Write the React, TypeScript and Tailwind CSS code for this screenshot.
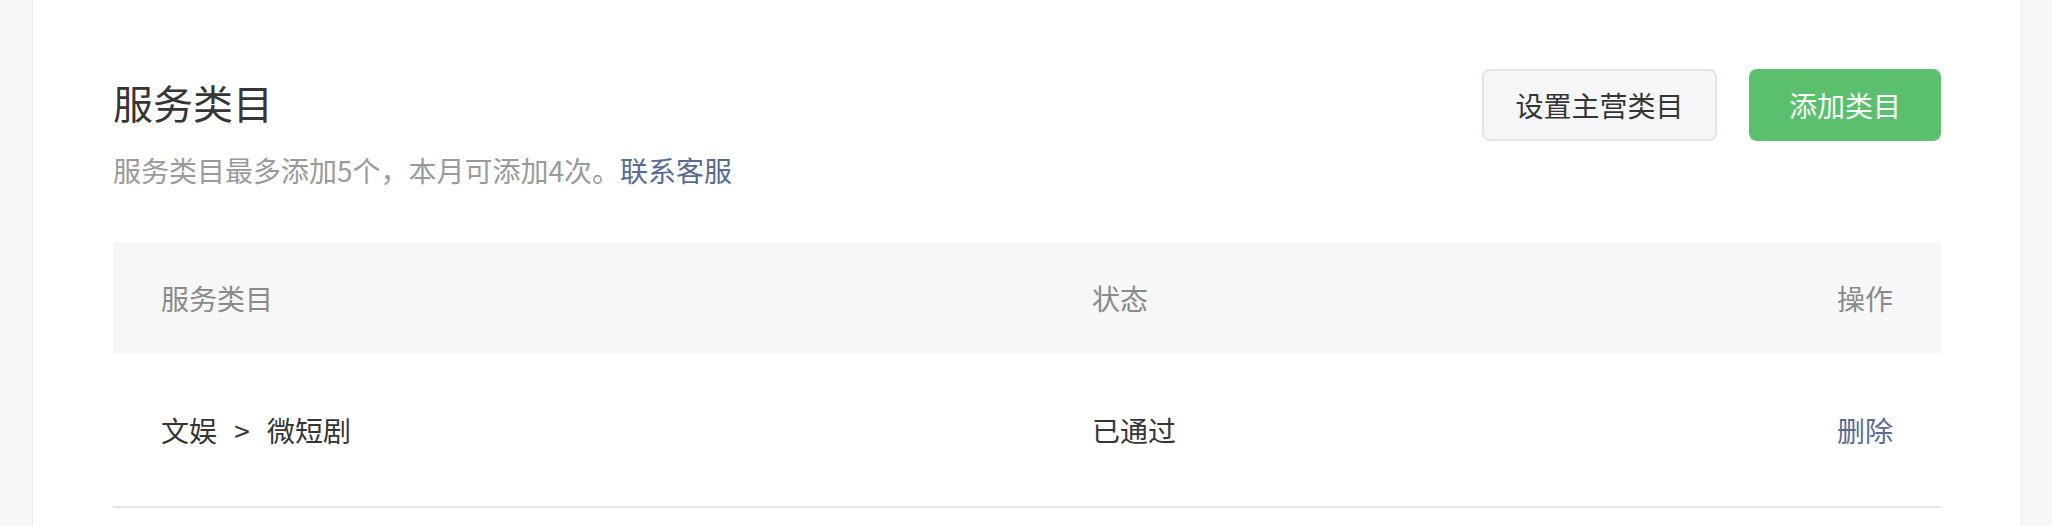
import React from "react";

const font = '"Noto Sans CJK SC", "Noto Sans", sans-serif';

export default function App() {
  return (
    <div
      className="min-h-screen w-full bg-[#f6f7f9] pl-[32px] pr-[30px]"
      style={{ fontFamily: font }}
    >
      <div className="min-h-screen bg-white border-x border-[#eceef1] px-[80px] pt-[69px]">
        <div className="flex items-start justify-between">
          <div className="mt-[5px]">
            <h1 className="text-[40px] leading-[56px] font-normal text-[#353535]">
              服务类目
            </h1>
            <p className="mt-[20px] text-[28px] leading-[40px] text-[#9a9a9a]">
              服务类目最多添加5个，本月可添加4次。
              <a className="text-[#576b95] cursor-pointer">联系客服</a>
            </p>
          </div>
          <div className="flex gap-[32px]">
            <button className="h-[72px] w-[235px] rounded-[8px] border-2 border-[#e2e4e8] bg-[#f5f6f8] text-[28px] text-[#353535]">
              设置主营类目
            </button>
            <button className="h-[72px] w-[192px] rounded-[8px] bg-[#5ac06d] text-[28px] text-white">
              添加类目
            </button>
          </div>
        </div>

        <div className="mt-[52px]">
          <div className="grid h-[112px] grid-cols-[931px_1fr_auto] items-center bg-[#f6f7f9] px-[48px] text-[28px] text-[#8a8a8a]">
            <div>服务类目</div>
            <div>状态</div>
            <div className="text-right">操作</div>
          </div>
          <div className="grid h-[154px] grid-cols-[931px_1fr_auto] items-center border-b-2 border-[#e6e7eb] px-[48px] text-[28px] text-[#353535]">
            <div className="flex items-center">
              <span>文娱</span>
              <span className="w-[50px] text-center">&gt;</span>
              <span>微短剧</span>
            </div>
            <div>已通过</div>
            <div className="text-right">
              <a className="text-[#576b95] cursor-pointer">删除</a>
            </div>
          </div>
        </div>
      </div>
    </div>
  );
}
